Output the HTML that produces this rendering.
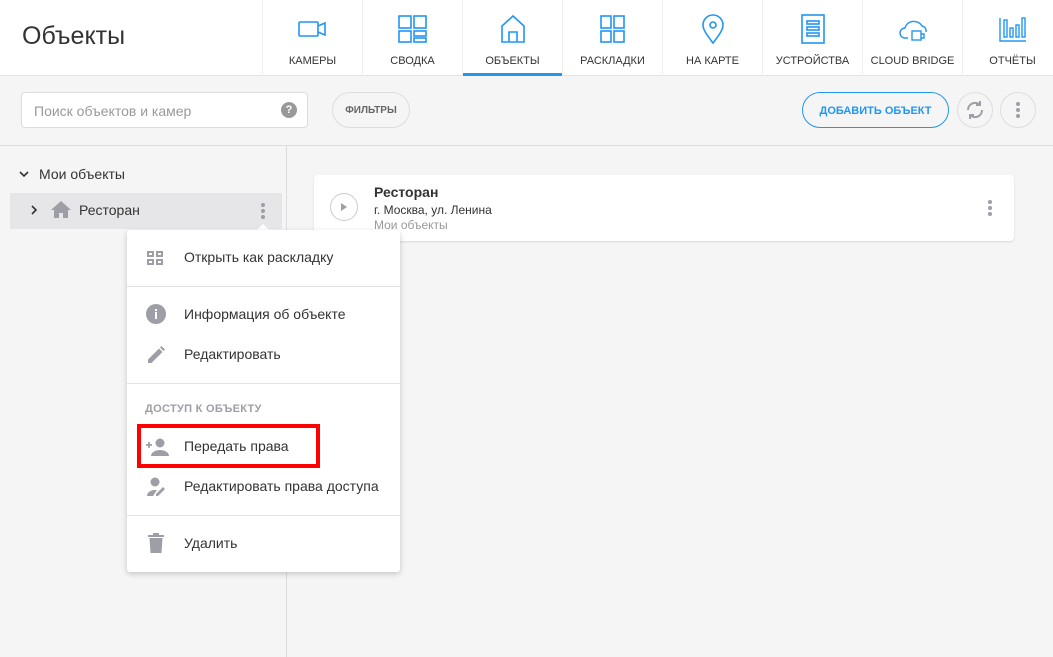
<!DOCTYPE html>
<html><head><meta charset="utf-8"><style>
*{box-sizing:border-box;margin:0;padding:0}
body{width:1053px;height:657px;overflow:hidden;background:#f5f5f5;font-family:"Liberation Sans",Roboto,sans-serif;position:relative;color:#333}
.hdr{position:absolute;left:0;top:0;width:1053px;height:76px;background:#fff;border-bottom:1px solid #e2e2e2}
.title{position:absolute;left:22px;top:22px;font-size:25px;color:#333}
.tab{position:absolute;top:0;width:100px;height:76px;border-left:1px solid #eee;text-align:center}
.tab svg{position:absolute;left:35px;top:14px}
.tab span{position:absolute;left:0;right:0;top:55px;font-size:11px;color:#333}
.tab.act:after{content:"";position:absolute;left:0;right:0;bottom:0;height:3px;background:#2196f3}
.abs{position:absolute}
.search{left:21px;top:92px;width:287px;height:36px;background:#fff;border:1px solid #ddd;border-radius:4px}
.search span{position:absolute;left:12px;top:10px;font-size:14px;color:#999}
.q{position:absolute;right:10px;top:9px;width:16px;height:16px;border-radius:50%;background:#999;color:#fff;font-size:11px;font-weight:bold;text-align:center;line-height:16px}
.filt{left:332px;top:92px;width:78px;height:36px;border:1px solid #ddd;border-radius:18px;font-size:10px;color:#666;text-align:center;line-height:36px;font-weight:bold}
.add{left:802px;top:92px;width:147px;height:36px;border:1px solid #2196f3;border-radius:18px;font-size:11px;font-weight:bold;color:#2196f3;text-align:center;line-height:36px}
.circ{top:92px;width:36px;height:36px;border:1px solid #ddd;border-radius:50%}
.line{left:0;top:145px;width:1053px;height:1px;background:#ddd}
.vline{left:286px;top:146px;width:1px;height:511px;background:#ddd}
.sel{left:10px;top:193px;width:272px;height:36px;background:#e6e6e8}
.card{left:314px;top:175px;width:700px;height:66px;background:#fff;border-radius:4px;box-shadow:0 1px 2px rgba(0,0,0,.12)}
.menu{left:127px;top:230px;width:273px;height:342px;background:#fff;border-radius:3px;box-shadow:0 2px 6px rgba(0,0,0,.2)}
.mi{position:absolute;left:57px;font-size:14px;color:#333}
.sep{position:absolute;left:0;width:273px;height:1px;background:#e4e4e4}
.ic{position:absolute;left:19px}
.dots i{display:block;width:4px;height:4px;border-radius:50%;background:#9e9ea6;margin-bottom:2px}
</style></head><body>
<div class="hdr">
<div class="title">Объекты</div>
<div class="tab" style="left:262px"><svg width="30" height="30" viewBox="0 0 30 30" fill="none" stroke="#2196f3" stroke-width="1.6"><rect x="1" y="8" width="19" height="14" rx="1"/><path d="M20 12l7-3v12l-7-3"/></svg><span>КАМЕРЫ</span></div>
<div class="tab" style="left:362px"><svg width="30" height="30" viewBox="0 0 30 30" fill="none" stroke="#2196f3" stroke-width="1.6"><rect x="1" y="2" width="12" height="12"/><rect x="16" y="2" width="12" height="12"/><rect x="1" y="17" width="12" height="11"/><rect x="16" y="17" width="12" height="5"/><rect x="16" y="24" width="12" height="4"/></svg><span>СВОДКА</span></div>
<div class="tab act" style="left:462px"><svg width="30" height="30" viewBox="0 0 30 30" fill="none" stroke="#2196f3" stroke-width="1.6"><path d="M4 28V12L15 2l11 10v16z"/><path d="M11 28V18h8v10"/></svg><span style="color:#333">ОБЪЕКТЫ</span></div>
<div class="tab" style="left:562px"><svg width="30" height="30" viewBox="0 0 30 30" fill="none" stroke="#2196f3" stroke-width="1.6"><rect x="3" y="2" width="10" height="12"/><rect x="16" y="2" width="10" height="12"/><rect x="3" y="17" width="10" height="11"/><rect x="16" y="17" width="10" height="11"/></svg><span>РАСКЛАДКИ</span></div>
<div class="tab" style="left:662px"><svg width="30" height="30" viewBox="0 0 30 30" fill="none" stroke="#2196f3" stroke-width="1.6"><path d="M15 29C9 21 5 16 5 11a10 10 0 0120 0c0 5-4 10-10 18z"/><circle cx="15" cy="11" r="3"/></svg><span>НА КАРТЕ</span></div>
<div class="tab" style="left:762px"><svg width="30" height="30" viewBox="0 0 30 30" fill="none" stroke="#2196f3" stroke-width="1.6"><rect x="4" y="1" width="22" height="28"/><rect x="9" y="7" width="12" height="3"/><rect x="9" y="13" width="12" height="3"/><rect x="9" y="19" width="12" height="3"/></svg><span>УСТРОЙСТВА</span></div>
<div class="tab" style="left:862px"><svg width="30" height="30" viewBox="0 0 30 30" fill="none" stroke="#2196f3" stroke-width="1.4"><path d="M10 24H7a5 5 0 010-10 9 8 0 0117-2 5 5 0 014 6"/><rect x="14" y="17" width="9" height="9"/><path d="M23 20h3v4h-3"/></svg><span>CLOUD BRIDGE</span></div>
<div class="tab" style="left:962px"><svg width="30" height="30" viewBox="0 0 30 30" fill="none" stroke="#2196f3" stroke-width="1.4"><path d="M2 4v23h26"/><rect x="6" y="6" width="3" height="17"/><rect x="12" y="14" width="3" height="9"/><rect x="18" y="11" width="3" height="12"/><rect x="24" y="4" width="3" height="19"/></svg><span>ОТЧЁТЫ</span></div>
</div>
<div class="abs search"><span>Поиск объектов и камер</span><div class="q">?</div></div>
<div class="abs filt">ФИЛЬТРЫ</div>
<div class="abs add">ДОБАВИТЬ ОБЪЕКТ</div>
<div class="abs circ" style="left:957px"><svg width="34" height="34" viewBox="0 0 34 34" fill="none" stroke="#9e9ea6" stroke-width="2"><path d="M10 17a7 7 0 0112-5"/><path d="M24 17a7 7 0 01-12 5"/><path d="M22 8v4h-4" /><path d="M12 26v-4h4"/></svg></div>
<div class="abs circ" style="left:1000px"><div class="dots" style="position:absolute;left:15px;top:9px"><i></i><i></i><i></i></div></div>
<div class="abs line"></div>
<div class="abs vline"></div>
<svg class="abs" style="left:19px;top:170px" width="10" height="8" viewBox="0 0 10 8"><path d="M1 2l4 4 4-4" stroke="#333" stroke-width="1.6" fill="none"/></svg>
<div class="abs" style="left:39px;top:166px;font-size:14px;color:#333">Мои объекты</div>
<div class="abs sel"></div>
<svg class="abs" style="left:30px;top:205px" width="8" height="10" viewBox="0 0 8 10"><path d="M2 1l4 4-4 4" stroke="#333" stroke-width="1.6" fill="none"/></svg>
<svg class="abs" style="left:51px;top:201px" width="20" height="17" viewBox="0 0 20 17"><path d="M10 0L0 9h3v8h5v-5h4v5h5V9h3z" fill="#9e9ea6"/></svg>
<div class="abs" style="left:79px;top:202px;font-size:14px;color:#333">Ресторан</div>
<div class="abs dots" style="left:261px;top:203px"><i></i><i></i><i></i></div>
<div class="abs card">
<div style="position:absolute;left:16px;top:18px;width:28px;height:28px;border:1px solid #ccc;border-radius:50%"></div>
<svg style="position:absolute;left:27px;top:28px" width="6" height="8"><path d="M0 0l6 4-6 4z" fill="#9e9ea6"/></svg>
<div style="position:absolute;left:60px;top:9px;font-size:14px;font-weight:bold;color:#333">Ресторан</div>
<div style="position:absolute;left:60px;top:28px;font-size:12px;color:#333">г. Москва, ул. Ленина</div>
<div style="position:absolute;left:60px;top:43px;font-size:12px;color:#999">Мои объекты</div>
<div class="dots" style="position:absolute;left:674px;top:25px"><i></i><i></i><i></i></div>
</div>
<div class="abs" style="left:257px;top:224px;width:0;height:0;border-left:6px solid transparent;border-right:6px solid transparent;border-bottom:6px solid #fff"></div>
<div class="abs menu">
<svg class="ic" style="top:19px" width="18" height="18" viewBox="0 0 18 18" fill="#9e9ea6"><rect x="1" y="2" width="7" height="6"/><rect x="10" y="2" width="7" height="6"/><rect x="1" y="10" width="7" height="6"/><rect x="10" y="10" width="7" height="6"/><rect x="3" y="4" width="3" height="2" fill="#fff"/><rect x="12" y="4" width="3" height="2" fill="#fff"/><rect x="3" y="12" width="3" height="2" fill="#fff"/><rect x="12" y="12" width="3" height="2" fill="#fff"/></svg>
<div class="mi" style="top:19px">Открыть как раскладку</div>
<div class="sep" style="top:56px"></div>
<svg class="ic" style="top:74px" width="20" height="20" viewBox="0 0 20 20"><circle cx="10" cy="10" r="10" fill="#9e9ea6"/><rect x="9" y="8" width="2" height="7" fill="#fff"/><rect x="9" y="5" width="2" height="2" fill="#fff"/></svg>
<div class="mi" style="top:76px">Информация об объекте</div>
<svg class="ic" style="top:115px" width="20" height="20" viewBox="0 0 20 20"><path d="M2 18v-3.5L13 3.5 16.5 7 5.5 18z M14 2.5l1.5-1.5 3.5 3.5-1.5 1.5z" fill="#9e9ea6"/></svg>
<div class="mi" style="top:116px">Редактировать</div>
<div class="sep" style="top:153px"></div>
<div style="position:absolute;left:18px;top:173px;font-size:11px;font-weight:bold;color:#9e9ea6;letter-spacing:.3px">ДОСТУП К ОБЪЕКТУ</div>
<svg class="ic" style="top:208px" width="24" height="18" viewBox="0 0 24 18" fill="#9e9ea6"><rect x="0" y="6" width="6" height="1.8"/><rect x="2.1" y="3.9" width="1.8" height="6"/><circle cx="14" cy="5" r="4.5"/><path d="M5 18c0-4 5-6 9-6s9 2 9 6z"/></svg>
<div class="mi" style="top:208px">Передать права</div>
<svg class="ic" style="top:247px" width="22" height="20" viewBox="0 0 22 20" fill="#9e9ea6"><circle cx="9" cy="5" r="4.5"/><path d="M1 19c0-4 4-6 8-6h2l-4 6z"/><path d="M10 19v-2l7-7 2 2-7 7z"/></svg>
<div class="mi" style="top:248px">Редактировать права доступа</div>
<div class="sep" style="top:285px"></div>
<svg class="ic" style="top:303px;left:21px" width="16" height="20" viewBox="0 0 16 20" fill="#9e9ea6"><rect x="0" y="2" width="16" height="2"/><rect x="5" y="0" width="6" height="2"/><path d="M1.5 5h13l-1 15h-11z"/></svg>
<div class="mi" style="top:305px">Удалить</div>
</div>
<div class="abs" style="left:137px;top:424px;width:183px;height:44px;border:4px solid #f00"></div>
</body></html>
